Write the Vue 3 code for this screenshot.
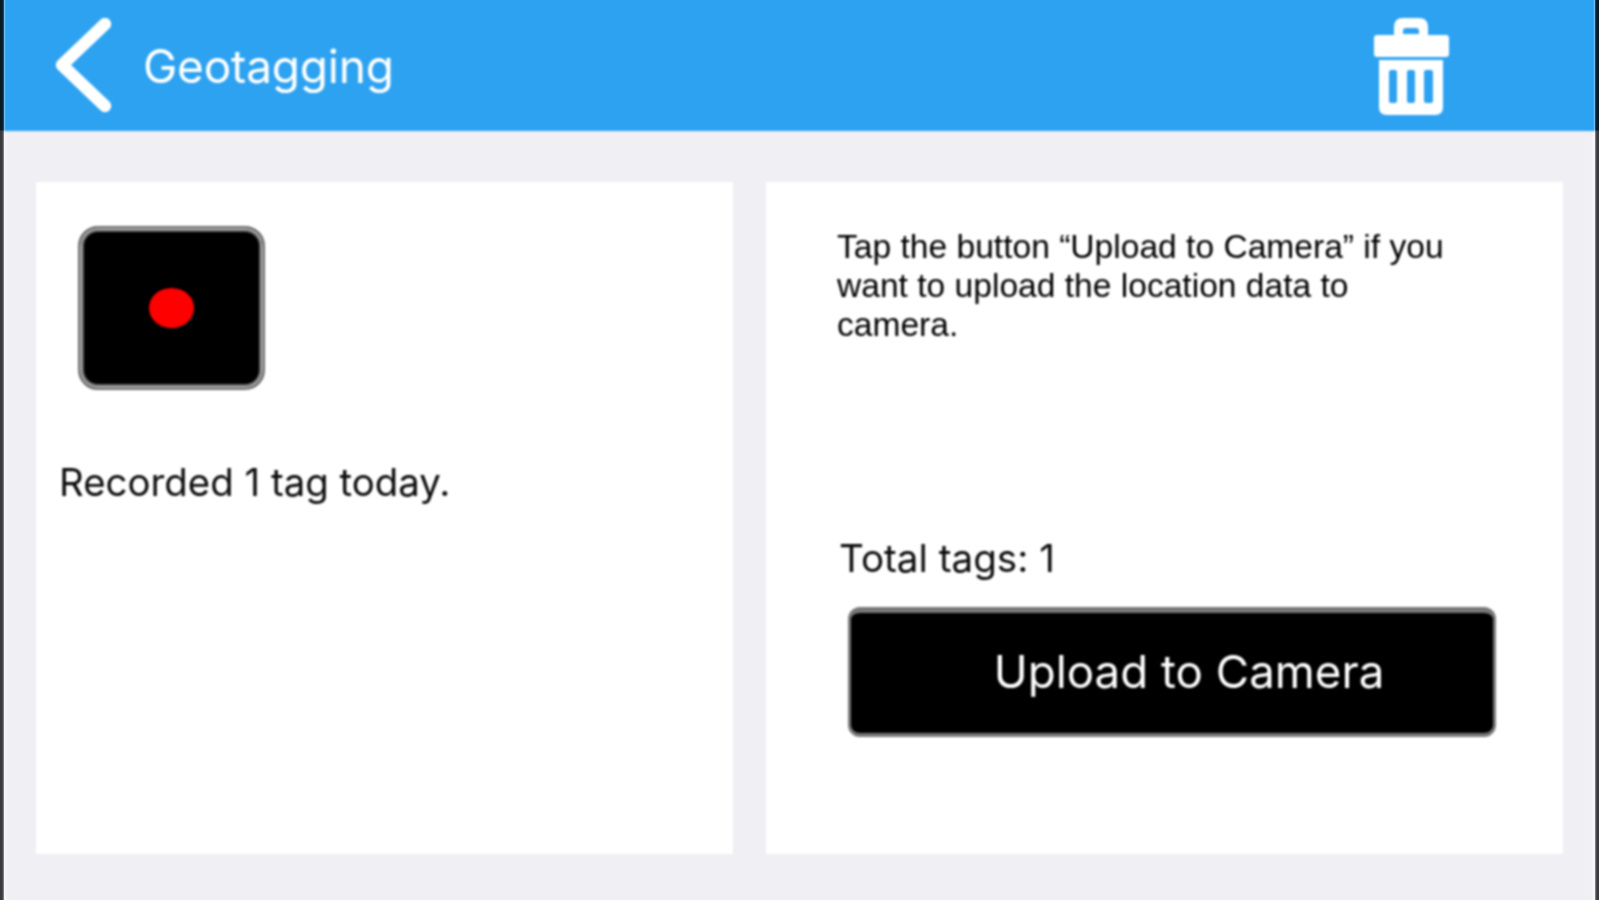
<script setup>
const title = 'Geotagging'
</script>

<template>
  <div class="screen">
    <div class="edge"></div>
    <div class="app">
      <header class="bar">
        <svg class="back" width="60" height="96" viewBox="0 0 60 96" aria-hidden="true">
          <path d="M51 6 L8 47 L51 88" fill="none" stroke="#fff" stroke-width="12.5" stroke-linecap="round" stroke-linejoin="round" />
        </svg>
        <span class="title">{{ title }}</span>
        <svg class="trash" width="75" height="97" viewBox="0 0 75 97" aria-hidden="true">
          <path fill="#fff" fill-rule="evenodd" d="M20 17 V9 Q20 0 29 0 H45 Q54 0 54 9 V17 H72 Q75 17 75 20 V36 Q75 39 72 39 H3 Q0 39 0 36 V20 Q0 17 3 17 Z M29 16 H45 V13 Q45 10 42 10 H32 Q29 10 29 13 Z" />
          <path fill="#fff" fill-rule="evenodd" d="M5 42 H69 V89 Q69 97 61 97 H13 Q5 97 5 89 Z M15 55 V83 Q15 85 17 85 H21 Q23 85 23 83 V55 Q23 52 21 52 H17 Q15 52 15 55 Z M33 55 V83 Q33 85 35 85 H39 Q41 85 41 83 V55 Q41 52 39 52 H35 Q33 52 33 55 Z M50 55 V83 Q50 85 52 85 H57 Q59 85 59 83 V55 Q59 52 57 52 H52 Q50 52 50 55 Z" />
        </svg>
      </header>
      <main class="content">
        <section class="panel left">
          <div class="record"><span class="dot"></span></div>
          <p class="recorded">Recorded 1 tag today.</p>
        </section>
        <section class="panel right">
          <p class="help">Tap the button “Upload to Camera” if you want to upload the location data to camera.</p>
          <p class="total">Total tags: 1</p>
          <button class="upload">Upload to Camera</button>
        </section>
      </main>
    </div>
    <div class="edge"></div>
  </div>
</template>

<style>
html, body { margin: 0; background: #efeff4; }
</style>

<style scoped>
.screen { display: flex; width: 1599px; height: 900px; overflow: hidden; }
.edge {
  width: 4px; flex: none;
  background: linear-gradient(#0b1a26 0, #0b1a26 130px, #3a3a3c 131px, #3a3a3c 100%);
}
.app { flex: 1; display: flex; flex-direction: column; background: #efeff4; min-width: 0; margin: -4px 0; filter: blur(1px); }
.bar {
  height: 135px; flex: none; display: flex; align-items: center; background: #2da2f1;
  padding: 4px 146px 0 50px; box-sizing: border-box;
}
.back { flex: none; }
.title {
  margin-left: 29px; color: #fff; font: 400 46px/52px Inter, sans-serif; letter-spacing: -.2px;
}
.trash { flex: none; margin-left: auto; margin-top: 1px; }
.content {
  flex: 1; display: flex; gap: 33px; padding: 51px 30px 0;
  border-left: 2px solid #fbfbfd; border-right: 2px solid #fbfbfd;
}
.panel { background: #fff; height: 672px; box-sizing: border-box; }
.left { width: 697px; padding: 44px 0 0 42px; }
.right { width: 797px; padding: 46px 0 0 71px; display: flex; flex-direction: column; align-items: flex-start; }
.record {
  width: 187px; height: 164px; box-sizing: border-box; background: #000; border: 2px solid #707070; border-radius: 20px;
  box-shadow: inset 0 0 0 2px #a8a8a8, inset 0 0 0 4px #666;
  display: flex; align-items: center; justify-content: center;
}
.dot { width: 45px; height: 40px; border-radius: 50%; background: #f00; }
.recorded { margin: 68px 0 0 -19px; font: 400 38.4px/48px Inter, sans-serif; color: #0c0c0c; }
.help { margin: 0; width: 640px; font: 400 33.6px/38.8px "Liberation Sans", Arial, sans-serif; color: #000; }
.total { margin: 190px 0 0 2px; font: 400 38.6px/48px Inter, sans-serif; color: #0c0c0c; }
.upload {
  margin: 25px 0 0 11px; width: 648px; height: 130px; box-sizing: border-box; background: #000; color: #fff;
  border: solid #777; border-width: 6px 3px 4px; border-radius: 12px; font: 400 45.7px/52px Inter, sans-serif; padding: 0 0 2px 34px;
}
</style>
